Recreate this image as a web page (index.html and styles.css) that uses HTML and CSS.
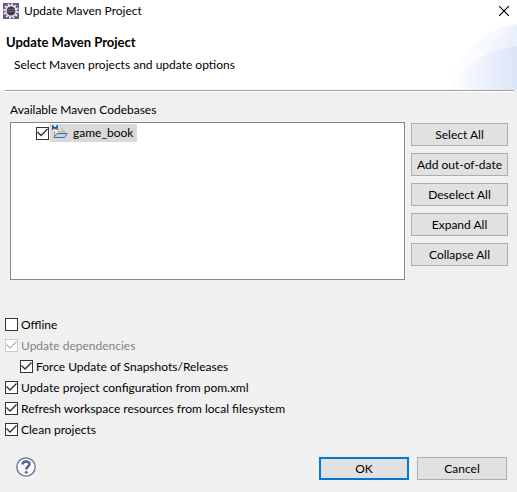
FILE: index.html
```html
<!DOCTYPE html>
<html lang="en">
<head>
<meta charset="utf-8">
<title>Update Maven Project</title>
<link rel="stylesheet" href="styles.css">
</head>
<body>
<form class="dialog">
  <header class="banner">
    <svg class="wave" viewBox="0 0 72 68" aria-hidden="true">
      <defs>
        <linearGradient id="far"><stop offset="0" stop-color="#fff"/><stop offset="1" stop-color="#f1f5fd"/></linearGradient>
        <linearGradient id="mid"><stop offset="0" stop-color="#f5f8fe"/><stop offset="1" stop-color="#e8eefb"/></linearGradient>
        <linearGradient id="near"><stop offset="0" stop-color="#fff"/><stop offset=".5" stop-color="#edf2fc"/><stop offset="1" stop-color="#dbe4f7"/></linearGradient>
      </defs>
      <path d="M0 68C10 34 38 6 72 2V68Z" fill="url(#far)"/>
      <path d="M40 36C46 22 56 10 72 3V68H40Z" fill="url(#mid)"/>
      <path d="M2 68C16 44 42 28 72 24V68Z" fill="url(#near)"/>
    </svg>
    <div class="titlebar">
      <svg class="app-icon" viewBox="0 0 16 16" aria-hidden="true">
        <rect width="16" height="16" fill="#67528c"/>
        <circle cx="8" cy="8" r="6.7" fill="none" stroke="#eee" stroke-width="2" stroke-dasharray="1.9 1.6"/>
        <circle cx="8" cy="8" r="5.2" fill="#3d374f" stroke="#e8e6ec" stroke-width="1.5"/>
        <path d="M4 6.5h8M4 8.5h8" stroke="#6e6684"/>
      </svg>
      <span class="window-name">Update Maven Project</span>
      <button class="close" type="button" aria-label="Close">
        <svg viewBox="0 0 10 10"><path d="M0 0L10 10M10 0L0 10" stroke="#000" stroke-width="1.2"/></svg>
      </button>
    </div>
    <h1>Update Maven Project</h1>
    <p>Select Maven projects and update options</p>
  </header>
  <hr>
  <main>
    <h2 id="codebases">Available Maven Codebases</h2>
    <div class="projects">
      <div class="tree" role="group" aria-labelledby="codebases">
        <label class="project">
          <input type="checkbox" checked>
          <span class="project-name">
            <svg viewBox="0 0 16 16" aria-hidden="true">
              <path d="M2.5 12V5.5H6L7 7H12.5V9" fill="#fbe6b0" stroke="#c79a4e"/>
              <path d="M1.8 12.5L5 8.5H15.3L12.5 12.5Z" fill="#b5d3f5" stroke="#3f6fb5"/>
              <path d="M9 3.5L12.5 6" stroke="#d8ad68"/>
              <path d="M0 0H6V6H0Z" fill="#f4f6fa"/>
              <path d="M.8 5V1L3 3.6L5.2 1V5" fill="none" stroke="#246098" stroke-width="1.5"/>
            </svg>
            game_book
          </span>
        </label>
      </div>
      <div class="actions">
        <button type="button">Select All</button>
        <button type="button">Add out-of-date</button>
        <button type="button">Deselect All</button>
        <button type="button">Expand All</button>
        <button type="button">Collapse All</button>
      </div>
    </div>
  </main>
  <div class="options">
    <label><input type="checkbox">Offline</label>
    <label class="disabled"><input type="checkbox" checked disabled>Update dependencies</label>
    <label class="nested"><input type="checkbox" checked>Force Update of Snapshots/Releases</label>
    <label><input type="checkbox" checked>Update project configuration from pom.xml</label>
    <label><input type="checkbox" checked>Refresh workspace resources from local filesystem</label>
    <label><input type="checkbox" checked>Clean projects</label>
  </div>
  <footer>
    <button class="help" type="button" aria-label="Help">
      <svg viewBox="0 0 20 20">
        <circle cx="10" cy="10" r="9.2" fill="#f6f8fb" stroke="#63728e" stroke-width="1.3"/>
        <path d="M6.6 7.6C6.6 3.4 13.4 3.4 13.4 7.2C13.4 9.6 10.2 9.6 10.2 12.6" fill="none" stroke="#50688f" stroke-width="2.5"/>
        <circle cx="10.2" cy="15.3" r="1.4" fill="#50688f"/>
      </svg>
    </button>
    <button class="default" type="submit">OK</button>
    <button type="button">Cancel</button>
  </footer>
</form>
</body>
</html>
```
FILE: styles.css
```css
* { box-sizing: border-box; }

body {
  margin: 0;
  background: #f0f0f0;
  color: #000;
  font: 12px/16px Lato, "Open Sans", sans-serif;
}

.banner {
  position: relative;
  height: 90px;
  background: #fff;
}

.wave {
  position: absolute;
  right: 0;
  bottom: 0;
  width: 72px;
  height: 68px;
}

.titlebar {
  display: flex;
  align-items: center;
  gap: 5px;
  height: 22px;
  padding: 0 8px 0 3px;
}

.app-icon { width: 16px; height: 16px; }

.window-name { flex: 1; }

h1, h2, p { margin: 0; }

h1 {
  padding: 12px 6px 0;
  font-size: 13px;
  line-height: 16px;
}

p { padding: 7px 14px 0; }

hr {
  height: 2px;
  margin: 0 3px 0 5px;
  border: 0;
  border-top: 1px solid #a0a0a0;
  background: #fff;
}

main { padding: 10px 9px 0 10px; }

h2 {
  margin-bottom: 4px;
  font-size: 12px;
  font-weight: 400;
}

.projects {
  display: flex;
  gap: 6px;
}

.tree {
  flex: 1;
  height: 158px;
  padding: 1px 25px;
  border: 1px solid #828790;
  background: #fff;
}

label {
  display: flex;
  align-items: center;
}

.project { gap: 1px; }

.project-name {
  display: flex;
  align-items: center;
  gap: 5px;
  height: 18px;
  padding: 0 4px 0 2px;
  background: #d9d9d9;
}

.project-name svg { width: 16px; height: 16px; }

button {
  height: 23px;
  padding: 0;
  border: 1px solid #adadad;
  background: #e1e1e1;
  color: inherit;
  font: inherit;
}

.actions {
  display: flex;
  flex-direction: column;
  gap: 7px;
  width: 97px;
  padding-top: 1px;
}

input {
  flex: none;
  width: 13px;
  height: 13px;
  margin: 0;
  appearance: none;
  border: 1px solid #333;
  background: #fff;
  color: #333;
}

input:checked::before {
  content: "";
  display: block;
  width: 11px;
  height: 11px;
  background: currentColor;
  clip-path: polygon(0 5px, 1px 4px, 4px 7px, 10px 1px, 11px 2px, 4px 9px);
}

input:disabled {
  border-color: #ccc;
  color: #bbb;
}

.options { padding: 34px 5px 0; }

.options label {
  gap: 3px;
  height: 21px;
}

.options .nested { padding-left: 15px; }

.options .disabled { color: #838383; }

footer {
  display: flex;
  gap: 8px;
  padding: 17px 10px 12px 16px;
}

footer button { width: 90px; }

.default { border: 2px solid #0078d7; }

.close, .help {
  border: 0;
  background: none;
}

.close {
  width: 10px;
  height: 10px;
}

.close svg, .help svg {
  display: block;
  width: 100%;
}

.help {
  width: 20px;
  height: 20px;
  margin-right: auto;
}
```
